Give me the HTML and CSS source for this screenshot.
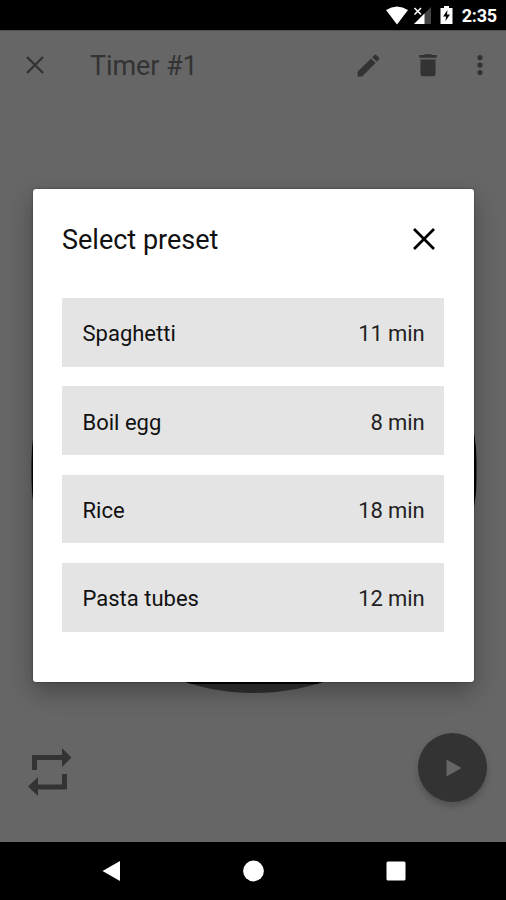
FILE: index.html
```html
<!DOCTYPE html>
<html lang="en">
<head>
<meta charset="utf-8">
<title>Timer #1</title>
<link rel="stylesheet" href="styles.css">
</head>
<body>
<div class="phone">
  <header class="status">
    <svg class="wifi" width="24" height="19" viewBox="0 0 24 19"><path d="M1 4Q12-3 23 4L12 18.5Z"/></svg>
    <svg class="signal" width="20" height="19" viewBox="0 0 20 19"><path class="dim" d="M18 1V18H1Z"/><path d="M11.500 7.500V18H1Z"/><path class="cross" d="M1.500 2L8 8.500M8 2L1.500 8.500"/></svg>
    <svg class="battery" width="13" height="20" viewBox="0 0 13 20"><path d="M4 1H9V3H12.500V19H.5V3H4Z"/><path class="bolt" d="M7.500 5L3 11.500H6L5.500 16L10 9.500H7Z"/></svg>
    <span class="clock">2:35</span>
  </header>
  <main class="screen">
    <div class="appbar">
      <svg class="close" width="20" height="20" viewBox="0 0 20 20"><path d="M2 2L18 18M18 2L2 18"/></svg>
      <h1 class="title">Timer #1</h1>
      <svg class="edit" width="29" height="29" viewBox="0 0 24 24"><path d="M3 17.250V21h3.750L17.810 9.940l-3.750-3.750L3 17.250zM20.710 7.040a1 1 0 0 0 0-1.410l-2.340-2.340a1 1 0 0 0-1.410 0l-1.830 1.830 3.750 3.750 1.830-1.830z"/></svg>
      <svg class="trash" width="30" height="30" viewBox="0 0 24 24"><path d="M6 19a2 2 0 0 0 2 2h8a2 2 0 0 0 2-2V7.500H6v11.500zM19 4h-3.500l-1-.7h-5l-1 .7H5v2.200h14V4z"/></svg>
      <svg class="more" width="30" height="30" viewBox="0 0 24 24"><circle cx="12" cy="6" r="2.100"/><circle cx="12" cy="12" r="2.100"/><circle cx="12" cy="18" r="2.100"/></svg>
    </div>
    <div class="dial"></div>
    <div class="controls">
      <svg class="repeat" width="44" height="48" viewBox="0 0 44 48"><path d="M4 22V7H34V0L43.500 9.500L34 19V12H9V22ZM39 26V41.500H10V48L0 38.500L10 29V36.500H34V26Z"/></svg>
      <div class="play"><svg width="16" height="18" viewBox="0 0 16 18"><path d="M.5 .5L15.500 9L.5 17.500Z"/></svg></div>
    </div>
  </main>
  <nav class="nav">
    <svg width="20" height="22" viewBox="0 0 20 22"><path d="M19 1V21L1.500 11Z"/></svg>
    <svg width="22" height="22" viewBox="0 0 22 22"><circle cx="10.500" cy="11" r="10.400"/></svg>
    <svg width="20" height="20" viewBox="0 0 20 20"><rect x=".5" y=".5" width="19" height="19" rx="1.500"/></svg>
  </nav>
  <section class="dialog">
    <div class="head">
      <h2>Select preset</h2>
      <svg class="dismiss" width="24" height="24" viewBox="0 0 24 24"><path d="M2 2L22 22M22 2L2 22"/></svg>
    </div>
    <ul class="presets">
      <li><span>Spaghetti</span><span class="time">11 min</span></li>
      <li><span>Boil egg</span><span class="time">8 min</span></li>
      <li><span>Rice</span><span class="time">18 min</span></li>
      <li><span>Pasta tubes</span><span class="time">12 min</span></li>
    </ul>
  </section>
</div>
</body>
</html>
```
FILE: styles.css
```css
* { box-sizing: border-box; margin: 0; padding: 0; }
body { font-family: Roboto, "Liberation Sans", sans-serif; background: #000; overflow: hidden; }
svg { display: block; flex: none; }
.phone { position: relative; display: flex; flex-direction: column; width: 506px; height: 900px; overflow: hidden; }
.status { height: 30px; display: flex; align-items: center; justify-content: flex-end; padding-right: 9px; background: #000; color: #fff; fill: #fff; }
.wifi { margin-right: 4px; }
.signal { margin-right: 7px; }
.battery { margin-right: 9px; }
.dim { fill: #444; }
.cross { stroke: #fff; stroke-width: 1.6; }
.bolt { fill: #000; }
.clock { font-size: 18px; font-weight: 700; line-height: 30px; padding-top: 2px; letter-spacing: -.2px; }
.screen { position: relative; flex: 1; display: flex; flex-direction: column; justify-content: space-between; background: #666; border-top: 1px solid #505050; fill: #333; }
.appbar { display: flex; align-items: center; height: 68px; padding: 0 11px 0 25px; }
.close { stroke: #333; stroke-width: 2.4; }
.title { flex: 1; margin-left: 45px; padding-top: 2px; font-size: 27px; font-weight: 400; line-height: 34px; color: #333; letter-spacing: -.1px; }
.edit { margin-right: -1px; }
.trash { margin-left: 31px; }
.more { margin-left: 22px; }
.dial { position: absolute; left: 30.500px; top: 216px; width: 446px; height: 446px; border-radius: 50%; overflow: hidden; background: #303030; }
.dial::before { content: ""; position: absolute; inset: 0 1px 9px 1px; background: #000; }
.controls { display: flex; align-items: center; justify-content: space-between; padding: 0 19px 40px 28px; }
.repeat { margin-top: 9px; }
.play { display: flex; align-items: center; justify-content: center; width: 69px; height: 69px; padding-left: 2px; border-radius: 50%; background: #333; fill: #666; box-shadow: 0 4px 7px rgba(0, 0, 0, .22); }
.nav { display: flex; align-items: center; justify-content: space-between; height: 58px; padding: 0 100px 0 101px; background: #000; fill: #fff; }
.dialog { position: absolute; left: 33px; top: 189px; width: 441.400px; height: 493px; padding: 29px 30px 0 29px; border-radius: 3px; background: #fff; box-shadow: 0 0 2px rgba(0, 0, 0, .5), 0 10px 24px rgba(0, 0, 0, .3); color: #111; }
.head { display: flex; align-items: center; justify-content: space-between; height: 42px; padding-right: 8px; }
.head h2 { padding-top: 2px; font-size: 27px; font-weight: 400; line-height: 42px; }
.dismiss { stroke: #000; stroke-width: 2.8; }
.presets { display: grid; gap: 19.7px; margin-top: 38px; list-style: none; }
.presets li { display: flex; align-items: center; justify-content: space-between; height: 68.700px; padding: 3px 20px 0 20.500px; background: #e4e4e4; font-size: 22px; }
.time { color: #222; letter-spacing: -.15px; }
```
